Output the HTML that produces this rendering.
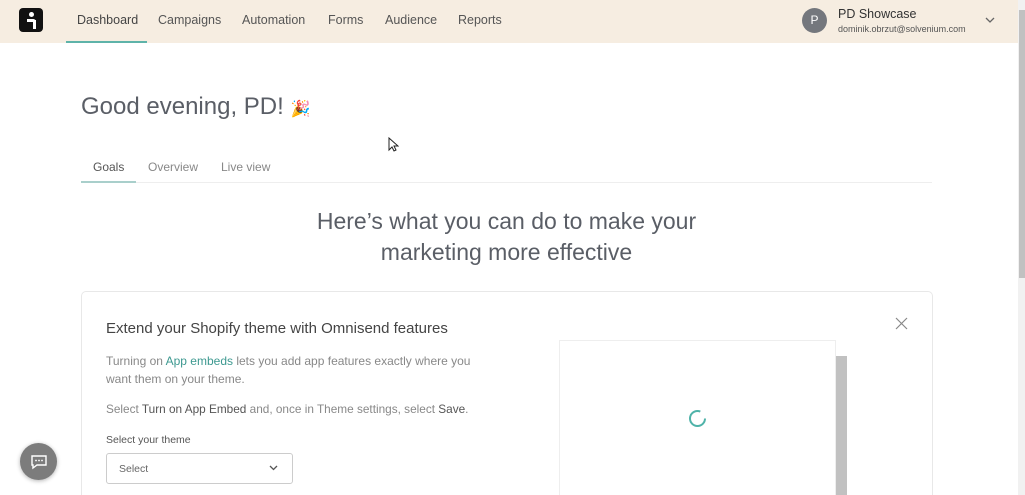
<!DOCTYPE html>
<html><head><meta charset="utf-8"><style>
*{margin:0;padding:0;box-sizing:border-box}
html,body{width:1025px;height:495px;overflow:hidden}
body{background:#fff;font-family:"Liberation Sans",sans-serif;position:relative;color:#3d4148}
.hdr{position:absolute;left:0;top:0;width:1018px;height:43px;background:#f6ede1}
.logo{position:absolute;left:19px;top:8px;width:24px;height:24px;background:#111;border-radius:4px}
.nav{position:absolute;top:13px;font-size:12.5px;color:#555}
.sb{position:absolute;left:1018px;top:0;width:7px;height:495px;background:#f1f1f1}
.th{position:absolute;left:1019px;top:10px;width:6px;height:268px;background:#c1c1c1}
</style></head><body>
<div class="hdr">
<div class="logo"><div style="position:absolute;left:10px;top:4px;width:5px;height:5px;border-radius:50%;background:#fff"></div><div style="position:absolute;left:8px;top:11px;width:9px;height:9px;border:3px solid #fff;border-left:none;border-bottom:none;border-radius:0 3px 0 0"></div><div style="position:absolute;left:14px;top:12px;width:3px;height:9px;background:#fff"></div></div>
<div class="nav" style="left:77px;color:#444">Dashboard</div>
<div class="nav" style="left:158px">Campaigns</div>
<div class="nav" style="left:242px">Automation</div>
<div class="nav" style="left:328px">Forms</div>
<div class="nav" style="left:385px">Audience</div>
<div class="nav" style="left:458px">Reports</div>
<div style="position:absolute;left:66px;top:41px;width:81px;height:2px;background:#5eb3a9"></div>
<div style="position:absolute;left:802px;top:8px;width:25px;height:25px;border-radius:50%;background:#74777d;color:#fff;font-size:12px;text-align:center;line-height:25px">P</div>
<div style="position:absolute;left:838px;top:7px;font-size:12.5px;color:#333">PD Showcase</div>
<div style="position:absolute;left:838px;top:24px;font-size:9px;color:#555">dominik.obrzut@solvenium.com</div>
<svg style="position:absolute;left:985px;top:17px" width="10" height="7"><path d="M1 1l4 4 4-4" stroke="#666" stroke-width="1.3" fill="none"/></svg>
</div>
<div class="sb"></div><div class="th"></div>
<div style="position:absolute;left:81px;top:93px;font-size:24px;color:#5a5e66">Good evening, PD! <span style="font-size:16px;color:#c9a27a">🎉</span></div>
<div style="position:absolute;left:93px;top:160px;font-size:12px;color:#555">Goals</div>
<div style="position:absolute;left:148px;top:160px;font-size:12px;color:#888">Overview</div>
<div style="position:absolute;left:221px;top:160px;font-size:12px;color:#888">Live view</div>
<div style="position:absolute;left:81px;top:182px;width:851px;height:1px;background:#eee"></div>
<div style="position:absolute;left:81px;top:181px;width:55px;height:2px;background:#a9cfcb"></div>
<div style="position:absolute;left:81px;top:206px;width:851px;text-align:center;font-size:23px;line-height:31px;color:#5a5e66">Here’s what you can do to make your<br>marketing more effective</div>
<div style="position:absolute;left:81px;top:291px;width:852px;height:204px;border:1px solid #e8e8e8;border-bottom:none;border-radius:5px 5px 0 0"></div>
<div style="position:absolute;left:106px;top:320px;font-size:15px;color:#444">Extend your Shopify theme with Omnisend features</div>
<div style="position:absolute;left:106px;top:352px;font-size:12px;line-height:18px;color:#888;width:390px">Turning on <span style="color:#3d9990">App embeds</span> lets you add app features exactly where you want them on your theme.</div>
<div style="position:absolute;left:106px;top:402px;font-size:11.8px;color:#888">Select <span style="color:#555">Turn on App Embed</span> and, once in Theme settings, select <span style="color:#555">Save</span>.</div>
<div style="position:absolute;left:106px;top:434px;font-size:10.5px;color:#555">Select your theme</div>
<div style="position:absolute;left:106px;top:453px;width:187px;height:31px;border:1px solid #ccc;border-radius:3px;font-size:10.5px;color:#666;padding:9px 12px">Select</div>
<svg style="position:absolute;left:269px;top:465px" width="9" height="6"><path d="M1 1l3.5 3.5L8 1" stroke="#555" stroke-width="1.3" fill="none"/></svg>
<svg style="position:absolute;left:895px;top:317px" width="13" height="13"><path d="M1 1l11 11M12 1L1 12" stroke="#888" stroke-width="1.2"/></svg>
<div style="position:absolute;left:559px;top:340px;width:277px;height:155px;border:1px solid #eee;border-bottom:none"></div>
<div style="position:absolute;left:836px;top:356px;width:11px;height:139px;background:#c1c1c1"></div>
<svg style="position:absolute;left:688px;top:409px" width="19" height="19"><circle cx="9.5" cy="9.5" r="7.5" stroke="#4fb3a9" stroke-width="2" fill="none" stroke-dasharray="38 9"/></svg>
<div style="position:absolute;left:20px;top:443px;width:37px;height:37px;border-radius:50%;background:#7c7c7c;box-shadow:0 1px 4px rgba(0,0,0,.3)"></div>
<svg style="position:absolute;left:30px;top:454px" width="18" height="16"><path d="M2 2h14v9H7l-4 3v-3H2z" stroke="#fff" stroke-width="1.4" fill="none"/><circle cx="6" cy="6.5" r=".9" fill="#fff"/><circle cx="9" cy="6.5" r=".9" fill="#fff"/><circle cx="12" cy="6.5" r=".9" fill="#fff"/></svg>
<svg style="position:absolute;left:388px;top:137px" width="11" height="16"><path d="M1 1v12l3-3 2 4 2-1-2-4h4z" fill="#fff" stroke="#222" stroke-width="1"/></svg>
</body></html>
